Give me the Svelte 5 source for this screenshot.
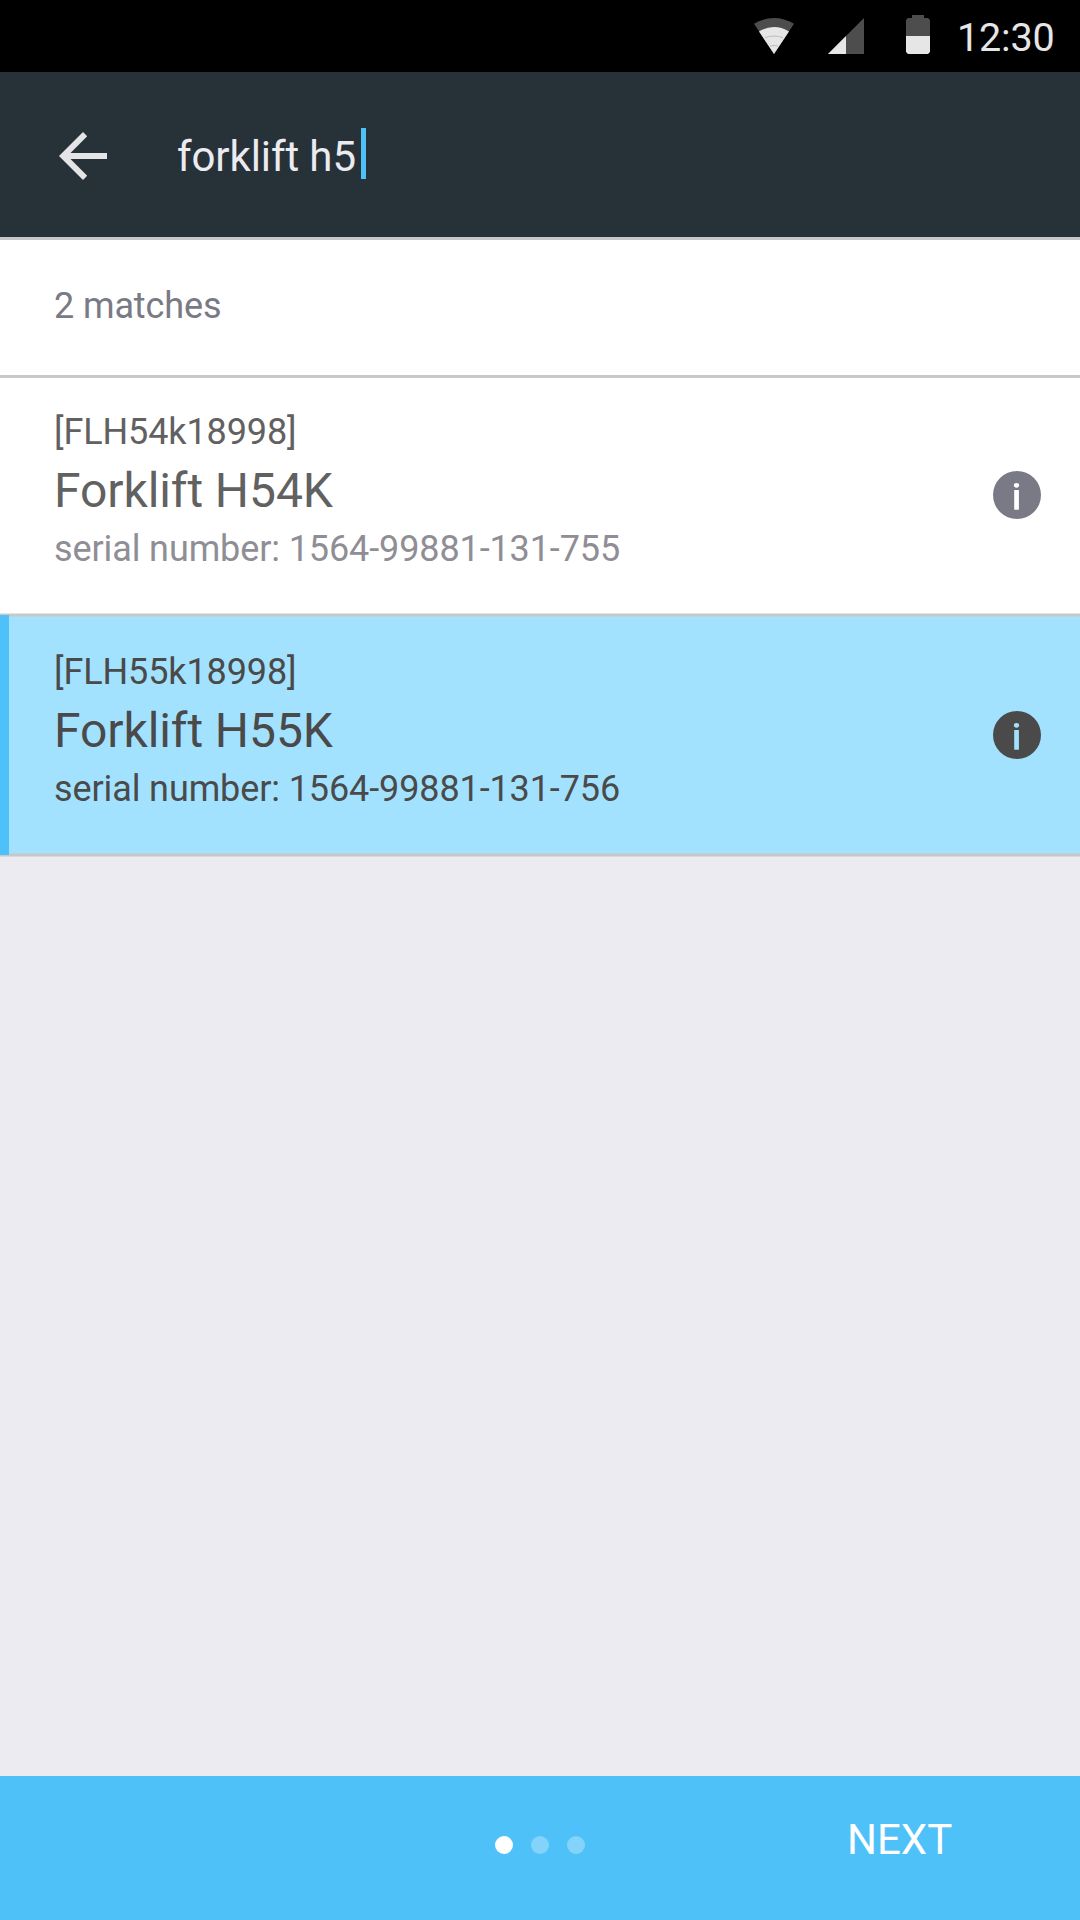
<script>
  const items = [
    { code: '[FLH54k18998]', name: 'Forklift H54K', serial: 'serial number: 1564-99881-131-755', selected: false },
    { code: '[FLH55k18998]', name: 'Forklift H55K', serial: 'serial number: 1564-99881-131-756', selected: true }
  ];
</script>

<div class="screen">
  <div class="status">
    <svg class="wifi" width="40" height="36" viewBox="0 0 40 36">
      <path d="M0 5.8Q20 -5.8 40 5.8L20 36Z" fill="#4d4d4d" />
      <path d="M5 13.4Q20 4.6 35 13.4L20 36Z" fill="#e6e6e6" />
      <path d="M11 19.7Q20 16.3 29 19.7M16 28Q20 26.8 24 28" fill="none" stroke="#bdbdbd" stroke-width="1" />
    </svg>
    <svg class="signal" width="36" height="36" viewBox="0 0 36 36">
      <path d="M36 0V36H0Z" fill="#4d4d4d" />
      <path d="M18 18V36H0Z" fill="#e6e6e6" />
    </svg>
    <svg class="battery" width="24" height="39" viewBox="0 0 24 39">
      <path d="M6 0H18V3H22L24 5V21H0V5L2 3H6Z" fill="#4d4d4d" />
      <path d="M0 21H24V37L22 39H2L0 37Z" fill="#e6e6e6" />
    </svg>
    <span class="time">12:30</span>
  </div>

  <header>
    <svg class="back" width="48" height="48" viewBox="0 0 48 48">
      <path d="M48 21H11.5L28.2 4.2L24 0L0 24L24 48L28.2 43.8L11.5 27H48Z" fill="#e4e4e6" />
    </svg>
    <span class="query">forklift h5</span>
    <span class="caret"></span>
  </header>

  <div class="matches">2 matches</div>

  <main>
    {#each items as item}
      <section class="item" class:selected={item.selected}>
        <div class="text">
          <div class="code">{item.code}</div>
          <div class="name">{item.name}</div>
          <div class="serial">{item.serial}</div>
        </div>
        <svg class="info" width="48" height="48" viewBox="0 0 48 48">
          <circle class="disc" cx="24" cy="24" r="24" />
          <ellipse class="mark" cx="23.5" cy="14.3" rx="2.6" ry="2.4" />
          <rect class="mark" x="21.2" y="19" width="4.7" height="19.7" />
        </svg>
      </section>
    {/each}
  </main>

  <footer>
    <div class="dots"><i class="on"></i><i></i><i></i></div>
    <div class="next">NEXT</div>
  </footer>
</div>

<style>
  :global(body) { margin: 0; }
  .screen {
    width: 1080px;
    height: 1920px;
    display: flex;
    flex-direction: column;
    background: #ebebf1;
    font-family: Roboto, "Noto Sans", sans-serif;
    overflow: hidden;
    white-space: nowrap;
  }
  .status {
    height: 72px;
    flex: none;
    box-sizing: border-box;
    background: #000;
    display: flex;
    align-items: flex-start;
    padding-left: 754px;
  }
  .wifi { margin-top: 18px; }
  .signal { margin: 18px 0 0 34px; }
  .battery { margin: 15px 0 0 42px; }
  .time {
    margin-left: 27px;
    line-height: 76px;
    font-size: 39.5px;
    letter-spacing: -0.15px;
    color: #e6e6e6;
  }
  header {
    height: 168px;
    flex: none;
    box-sizing: border-box;
    border-bottom: 3px solid #c8c8c8;
    background: #273238;
    display: flex;
    align-items: flex-start;
    padding-left: 59px;
  }
  .back { margin-top: 60px; }
  .query {
    width: 184px;
    margin: 56px 0 0 70px;
    line-height: 58px;
    font-size: 42px;
    letter-spacing: -0.1px;
    color: #ebebf1;
  }
  .caret {
    width: 5px;
    height: 51px;
    margin-top: 56px;
    background: #4fc1f9;
  }
  .matches {
    height: 138px;
    flex: none;
    box-sizing: border-box;
    border-bottom: 3px solid #c8c8c8;
    background: #fff;
    padding: 41px 54px 0;
    font-size: 36px;
    letter-spacing: -0.11px;
    line-height: 50px;
    color: #7a7986;
  }
  main {
    flex: 1;
    margin-top: -3px;
    padding-top: 3px;
  }
  .item {
    position: relative;
    height: 237px;
    box-sizing: border-box;
    display: flex;
    justify-content: space-between;
    padding: 30px 39px 0 54px;
    background: #fff;
    color: #616161;
  }
  .item::after {
    content: "";
    position: absolute;
    z-index: 1;
    left: 0;
    right: 0;
    bottom: -2px;
    height: 4px;
    background: linear-gradient(rgba(200, 200, 200, .5) 1px, #c8c8c8 1px, #c8c8c8 3px, rgba(200, 200, 200, .5) 3px);
  }
  .selected {
    height: 240px;
    padding-top: 33px;
    background: #a3e2ff;
    color: #4a4a4a;
  }
  .selected::before {
    content: "";
    position: absolute;
    z-index: 2;
    left: 0;
    top: 0;
    bottom: 0;
    width: 9px;
    background: #4fc1f9;
  }
  .code, .serial { font-size: 36px; letter-spacing: -0.11px; }
  .code { line-height: 48px; }
  .name { font-size: 48px; line-height: 70px; letter-spacing: -0.09px; }
  .serial { line-height: 46px; color: #8f8e95; }
  .selected .serial { color: #4a4a4a; }
  .info { margin-top: 63px; }
  .disc { fill: #7a7986; }
  .mark { fill: #fff; }
  .selected .disc { fill: #4a4a4a; }
  .selected .mark { fill: #a3e2ff; }
  footer {
    height: 144px;
    flex: none;
    background: #4fc1f9;
    display: flex;
    align-items: flex-start;
    padding-left: 495px;
  }
  .dots { display: flex; gap: 18px; margin-top: 60px; }
  .dots i {
    width: 18px;
    height: 18px;
    border-radius: 50%;
    background: rgba(255, 255, 255, .3);
  }
  .dots .on { background: #fff; }
  .next {
    margin: 35px 0 0 262px;
    font-size: 42px;
    line-height: 58px;
    color: #fff;
  }
</style>
